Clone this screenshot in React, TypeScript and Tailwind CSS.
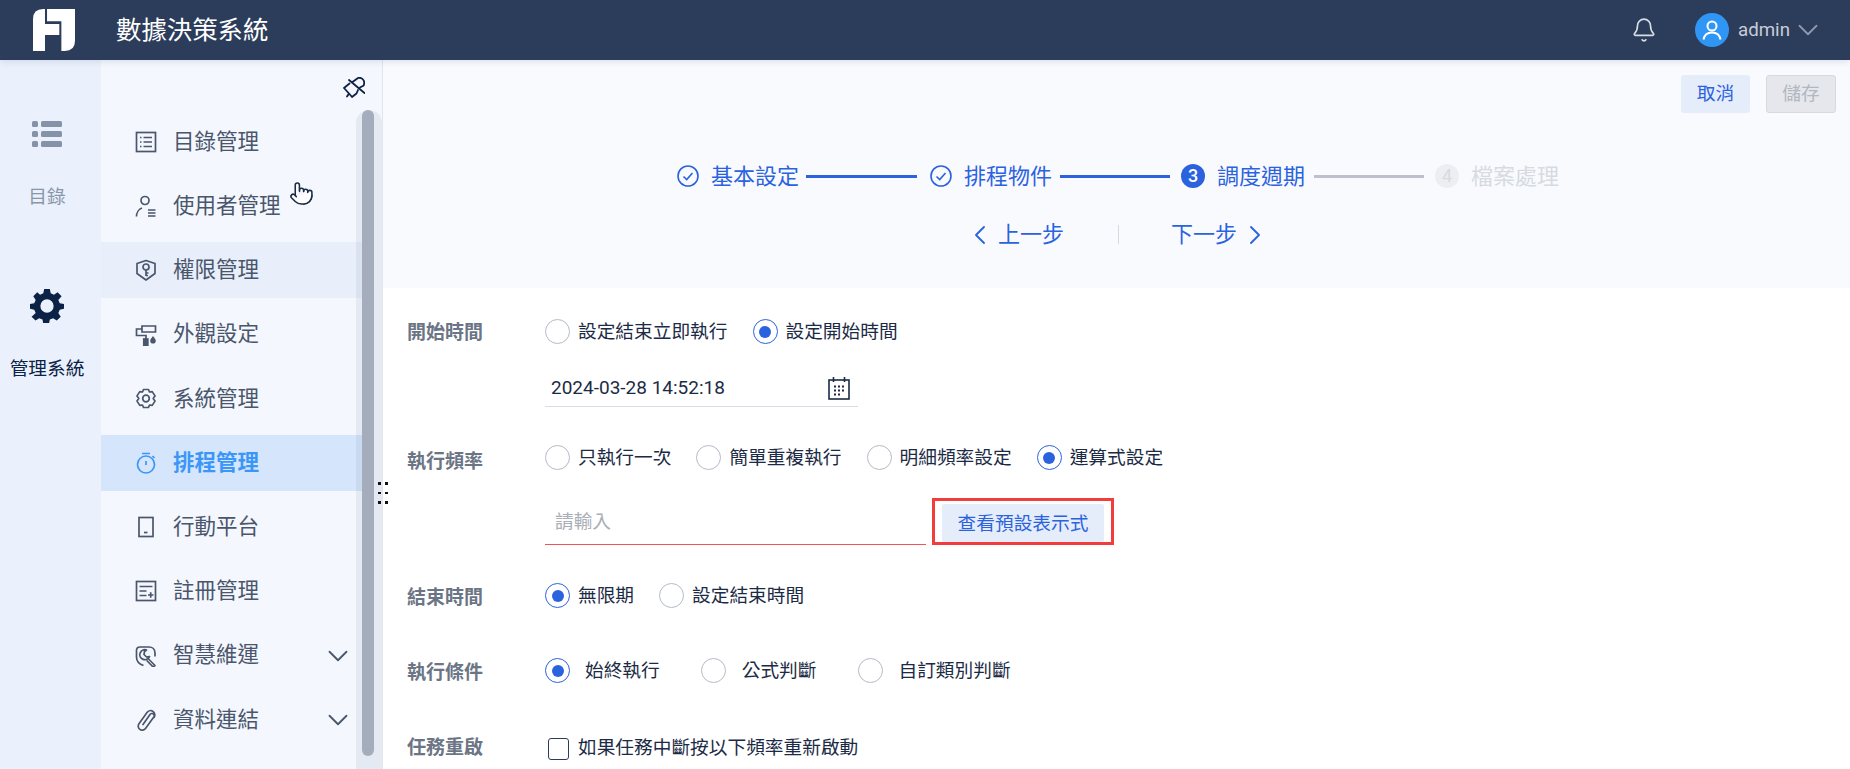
import { Bell, ChevronDown, ChevronLeft, ChevronRight, Pointer } from 'lucide-react'
import type { ReactNode } from 'react'

const FONT = "font-['Roboto','Noto_Sans_CJK_TC',sans-serif]"

function Ico({ children }: { children: ReactNode }) {
  return (
    <svg width="22" height="22" viewBox="0 0 22 22" fill="none" stroke="currentColor" strokeWidth="1.7" className="shrink-0">
      {children}
    </svg>
  )
}

const NAV: { label: string; icon: ReactNode; arrow?: boolean; state?: 'hover' | 'active' }[] = [
  {
    label: '目錄管理',
    icon: (
      <Ico>
        <rect x="1.500" y="1.500" width="19" height="19" />
        <path d="M5 6.500h1.500M8.500 6.500H17M5 11h1.500M8.500 11H17M5 15.500h1.500M8.500 15.500H17" />
      </Ico>
    ),
  },
  {
    label: '使用者管理',
    icon: (
      <Ico>
        <circle cx="10" cy="5.500" r="4" />
        <path d="M1.500 21.500c0-4 2.500-7.500 5.500-8.500M13 15h7.500M13 18h7.500M13 21h7.500" />
      </Ico>
    ),
  },
  {
    label: '權限管理',
    state: 'hover',
    icon: (
      <Ico>
        <path d="M2 4.500 11 1.500l9 3v10L11 21l-9-6.500z" strokeLinejoin="round" />
        <circle cx="11" cy="8" r="3" />
        <path d="M11 11v6M11 14h2.500M11 16.500h2" />
      </Ico>
    ),
  },
  {
    label: '外觀設定',
    icon: (
      <Ico>
        <path d="M7 2h13.500v6H7zM7 5H1.500v6.500H11v3.500" />
        <rect x="8.800" y="15" width="4" height="6.500" fill="currentColor" />
        <path d="M18 12c1.600 2.200 2.800 3.400 2.800 4.800a2.800 2.800 0 0 1-5.600 0c0-1.400 1.200-2.600 2.800-4.800z" fill="currentColor" stroke="none" />
      </Ico>
    ),
  },
  {
    label: '系統管理',
    icon: (
      <Ico>
        <path
          d="M8.500 1.500h5l1 2.500 2.700-.4 2.800 4.300-1.800 2.600 1.800 2.600-2.800 4.300-2.700-.4-1 2.500h-5l-1-2.500-2.700.4L2 13.100l1.800-2.600L2 7.900l2.800-4.300 2.700.4z"
          strokeLinejoin="round"
        />
        <circle cx="11" cy="10.500" r="3.300" />
      </Ico>
    ),
  },
  {
    label: '排程管理',
    state: 'active',
    icon: (
      <Ico>
        <circle cx="11" cy="12.500" r="8.500" />
        <path d="M7 1.500h8M11 9v4M17.500 4l2 2" />
      </Ico>
    ),
  },
  {
    label: '行動平台',
    icon: (
      <Ico>
        <rect x="4" y="1.500" width="14" height="19" />
        <path d="M9 16.500h3.500" />
      </Ico>
    ),
  },
  {
    label: '註冊管理',
    icon: (
      <Ico>
        <rect x="1.500" y="1.500" width="19" height="19" />
        <path d="M4.500 6.500h13M4.500 11h7M4.500 15.500h7M13 15h5.500M15.700 12.300v5.400" />
      </Ico>
    ),
  },
  {
    label: '智慧維運',
    arrow: true,
    icon: (
      <Ico>
        <path d="M8.500 20.500C4 19 1.500 16 1.500 12V5.500c0-2 1.500-3.500 3.500-3.500H14c3.500 0 6 2.500 6 6v3.500" />
        <path d="M11.500 5a5 5 0 1 0 3 6.500l-3 .5L9 9.500l.5-3zM13.500 14l6.500 6.500-1.800 1.500-6.500-6.500" strokeLinejoin="round" />
      </Ico>
    ),
  },
  {
    label: '資料連結',
    arrow: true,
    icon: (
      <Ico>
        <path d="M8 15.500 15 5.500a2.300 2.300 0 0 1 3.800 2.600L10.500 19.500a4 4 0 0 1-6.500-4.700L12 3.500a4.300 4.300 0 0 1 7 5" strokeLinecap="round" />
      </Ico>
    ),
  },
]

function Radio({ label, checked, gap = 'gap-2' }: { label: string; checked?: boolean; gap?: string }) {
  return (
    <label className={`flex items-center ${gap} whitespace-nowrap`}>
      {checked ? (
        <span className="flex h-[25px] w-[25px] items-center justify-center rounded-full border border-[#2b63df] bg-white">
          <span className="h-3 w-3 rounded-full bg-[#2b63df]" />
        </span>
      ) : (
        <span className="h-[25px] w-[25px] rounded-full border border-[#b4bac6] bg-white" />
      )}
      <span className="pt-[2px]">{label}</span>
    </label>
  )
}

function Field({ label, children, className, labelClass }: { label: string; children: ReactNode; className?: string; labelClass: string }) {
  return (
    <div className={`flex items-center ${className ?? ''}`}>
      <div className={`w-[138px] text-[19px] font-bold text-[#6b7585] ${labelClass}`}>{label}</div>
      {children}
    </div>
  )
}

function Step({ icon, label, muted }: { icon: ReactNode; label: string; muted?: boolean }) {
  return (
    <div className={`flex items-center gap-3 text-[22px] leading-none ${muted ? 'text-[#d6dae1]' : 'text-[#2b63df]'}`}>
      {icon}
      <span className="pt-px">{label}</span>
    </div>
  )
}

function CheckCircle() {
  return (
    <svg width="22" height="22" viewBox="0 0 22 22" fill="none" stroke="currentColor" strokeWidth="1.6">
      <circle cx="11" cy="11" r="10" />
      <path d="m6.500 11.500 3.200 3 5.800-6.500" />
    </svg>
  )
}

export default function App() {
  return (
    <div className={`flex h-screen flex-col overflow-hidden bg-white text-[18.7px] text-[#1c2b45] ${FONT}`}>
      <header className="z-10 flex h-[60px] shrink-0 items-center bg-[#2c3d5b] pl-[33px] pr-[25px] shadow-[0_2px_6px_rgba(44,61,91,0.12)]">
        <svg width="42" height="42" viewBox="9 8 41 41" fill="#fff">
          <path d="M9 49V18Q9 8 19 8h1.700v14.700h14v10.600h-14V49z" />
          <path d="M22.700 8H50v31q0 10-10 10h-3.300V20h-14z" />
        </svg>
        <div className="ml-[41px] text-[25.4px] text-white">數據決策系統</div>
        <Bell size={26} strokeWidth={1.5} className="ml-auto text-[#d8dce3]" />
        <div className="ml-[38px] flex h-[34px] w-[34px] items-center justify-center rounded-full bg-[#2f96f5]">
          <svg width="24" height="24" viewBox="0 0 24 24" fill="none" stroke="#fff" strokeWidth="2">
            <circle cx="12" cy="8" r="4.500" />
            <path d="M3.500 21.500c.8-4.500 4-7 8.500-7s7.700 2.500 8.500 7" />
          </svg>
        </div>
        <span className="ml-[9px] text-[#c7ccd6]">admin</span>
        <ChevronDown size={34} strokeWidth={1.3} className="ml-px text-[#8f98a8]" />
      </header>

      <div className="flex min-h-0 flex-1">
        <aside className="flex w-[101px] shrink-0 flex-col items-center bg-[#eaf1fd] pr-[7px] pt-[61px]">
          <svg width="30" height="26" viewBox="0 0 30 26" fill="#8592a8">
            <rect x="0" y="0" width="6" height="6" rx="1.500" />
            <rect x="9" y="0" width="21" height="6" rx="1.500" />
            <rect x="0" y="10" width="6" height="6" rx="1.500" />
            <rect x="9" y="10" width="21" height="6" rx="1.500" />
            <rect x="0" y="20" width="6" height="6" rx="1.500" />
            <rect x="9" y="20" width="21" height="6" rx="1.500" />
          </svg>
          <div className="mt-[36px] leading-[28px] text-[#8b97a9]">目錄</div>
          <svg width="34" height="34" viewBox="0 0 24 24" className="mt-[78px] text-[#0b2145]" fill="currentColor">
            <path fillRule="evenodd" d="M10 1h4l.6 3 2.300 1 2.600-1.700 2.800 2.800L20 8.700l1 2.300 3 .6v3.400l-3 .6-1 2.300 1.700 2.600-2.800 2.800-2.600-1.700-2.300 1-.6 3h-4l-.6-3-2.300-1-2.600 1.700-2.800-2.800L4 17.900l-1-2.300-3-.6v-3.400l3-.6 1-2.300-1.700-2.600 2.800-2.800L7.100 5l2.300-1zM12 8.300a4.700 4.700 0 1 0 0 9.400 4.700 4.700 0 0 0 0-9.400z" transform="translate(0 -1)" />
          </svg>
          <div className="mt-[32px] leading-[28px] text-[#0b2145]">管理系統</div>
        </aside>

        <nav className="relative w-[282px] shrink-0 border-r border-[#e3e6ee] bg-[#f4f7fe]">
          <div className="flex h-[54px] justify-end pr-[17px] pt-[17px] text-[#0b2145]">
            <svg width="22" height="22" viewBox="0 0 22 22" fill="none" stroke="currentColor" strokeWidth="1.8" strokeLinejoin="round" strokeLinecap="round">
              <path d="M6 3 21.500 16" />
              <path d="M9.500 5 15 1q3-.8 5 1.500t.7 6L17 10.500" />
              <path d="M6.500 6.500 1 11l5 5.500-2 3M6 16.500l3 3.500 4.500-3.500 1.500-3.500" />
            </svg>
          </div>
          <div className="flex flex-col gap-[8.2px]">
            {NAV.map(item => (
              <div
                key={item.label}
                className={`flex h-14 w-[266px] items-center pl-[34px] pr-[12px] text-[21.5px] ${
                  item.state === 'active'
                    ? 'bg-[#d4e5fc] font-bold text-[#3a97f8]'
                    : item.state === 'hover'
                      ? 'bg-[#e8effb] text-[#4a566b]'
                      : 'text-[#4a566b]'
                }`}
              >
                {item.icon}
                <span className="ml-4">{item.label}</span>
                {item.arrow && <ChevronDown size={34} strokeWidth={1.3} className="ml-auto" />}
              </div>
            ))}
          </div>
          <Pointer size={25} strokeWidth={1.5} fill="#fff" className="absolute left-[188px] top-[121px] text-[#1c2b45]" />
          <div className="absolute bottom-0 right-0 top-[50px] w-[26px] rounded-t-[13px] bg-[#8b97b0]/15" />
          <div className="absolute bottom-[13px] right-[8px] top-[50px] w-3 rounded-full bg-[#a5adbc]" />
          <div className="absolute left-[277px] top-[422px] grid grid-cols-2 gap-x-[7px] gap-y-[7px]">
            {[0, 1, 2, 3, 4, 5].map(i => (
              <span key={i} className="h-[2.5px] w-[2.5px] bg-[#111]" />
            ))}
          </div>
        </nav>

        <main className="flex min-w-0 flex-1 flex-col">
          <section className="h-[228px] shrink-0 bg-[#f9fafe] pr-[14px] pt-[15px]">
            <div className="flex justify-end gap-4 leading-none">
              <button className="h-[38px] w-[69px] rounded-[3px] bg-[#e6edfa] text-[#2b63df]">取消</button>
              <button className="h-[38px] w-[70px] rounded-[3px] border border-[#d6d9df] bg-[#e5e7ec] text-[#b2b7c0]">儲存</button>
            </div>
            <div className="mt-[51px] flex h-6 items-center pl-[294px]">
              <Step icon={<CheckCircle />} label="基本設定" />
              <div className="ml-[7px] mr-[13px] h-[3px] w-[111px] bg-[#2b63df]" />
              <Step icon={<CheckCircle />} label="排程物件" />
              <div className="ml-[8px] mr-[11px] h-[3px] w-[110px] bg-[#2b63df]" />
              <Step
                icon={
                  <span className="flex h-6 w-6 items-center justify-center rounded-full bg-[#2b63df] text-[18px] font-medium text-white">3</span>
                }
                label="調度週期"
              />
              <div className="ml-[9px] mr-[11px] h-[3px] w-[110px] bg-[#bcc1cb]" />
              <Step
                icon={
                  <span className="flex h-6 w-6 items-center justify-center rounded-full bg-[#edeef2] text-[18px] text-[#d6dae1]">4</span>
                }
                label="檔案處理"
                muted
              />
            </div>
            <div className="mt-[37px] flex h-[19px] items-center pl-[589px] text-[22px] text-[#2b63df]">
              <ChevronLeft size={32} strokeWidth={1.4} className="-ml-[8px] mr-[2px] shrink-0" />
              <span>上一步</span>
              <div className="ml-[54px] h-[19px] w-px bg-[#d5d9e2]" />
              <span className="ml-[52px]">下一步</span>
              <ChevronRight size={32} strokeWidth={1.4} className="ml-[2px] shrink-0" />
            </div>
          </section>

          <section className="flex flex-col pl-[24px] pt-[31px]">
            <Field label="開始時間" className="h-[25px]" labelClass="translate-y-[2px]">
              <div className="flex gap-[25px]">
                <Radio label="設定結束立即執行" />
                <Radio label="設定開始時間" checked />
              </div>
            </Field>
            <div className="ml-[138px] mt-[25px] flex h-[38px] w-[313px] items-center border-b border-[#d9dce6] pl-[6px] pt-[2px]">
              <span className="text-[19px]">2024-03-28 14:52:18</span>
              <svg width="22" height="23" viewBox="0 0 22 23" fill="none" stroke="#1c2b45" strokeWidth="1.6" className="ml-auto mr-[8px]">
                <rect x="1" y="3" width="20" height="19" />
                <path d="M5.500 0v5M16.500 0v5" />
                <path d="M6 9.500h2M10 9.500h2M14 9.500h2M6 13.500h2M10 13.500h2M14 13.500h2M6 17.500h2M10 17.500h2" strokeWidth="2" />
              </svg>
            </div>
            <Field label="執行頻率" className="mt-[38px] h-[25px]" labelClass="translate-y-[5px]">
              <div className="flex gap-[25px]">
                <Radio label="只執行一次" />
                <Radio label="簡單重複執行" />
                <Radio label="明細頻率設定" />
                <Radio label="運算式設定" checked />
              </div>
            </Field>
            <div className="ml-[138px] mt-[28px] flex items-end">
              <div className="flex h-[46px] w-[381px] items-center border-b border-[#f0545a] pl-[10px] pt-[2px] text-[#a9aeb8]">請輸入</div>
              <div className="relative ml-[6px] border-[3px] border-[#f33c3c] px-[7px] pb-0 pt-[3px]">
                <button className="block h-[38px] w-[162px] rounded-[2px] bg-[#e6edfa] pt-[3px] text-[#2b63df]">查看預設表示式</button>
              </div>
            </div>
            <Field label="結束時間" className="mt-[38px] h-[25px]" labelClass="translate-y-[3px]">
              <div className="flex gap-[25px]">
                <Radio label="無限期" checked />
                <Radio label="設定結束時間" />
              </div>
            </Field>
            <Field label="執行條件" className="mt-[50px] h-[25px]" labelClass="translate-y-[3px]">
              <div className="flex gap-[41px]">
                <Radio label="始終執行" checked gap="gap-[15px]" />
                <Radio label="公式判斷" gap="gap-4" />
                <Radio label="自訂類別判斷" gap="gap-4" />
              </div>
            </Field>
            <Field label="任務重啟" className="mt-[53px] h-[25px]" labelClass="translate-y-0">
              <label className="flex items-center gap-[9px] whitespace-nowrap">
                <span className="ml-[3px] h-[22px] w-[21px] rounded-[3px] border border-[#2c3d5b] bg-white" />
                <span>如果任務中斷按以下頻率重新啟動</span>
              </label>
            </Field>
          </section>
        </main>
      </div>
    </div>
  )
}
